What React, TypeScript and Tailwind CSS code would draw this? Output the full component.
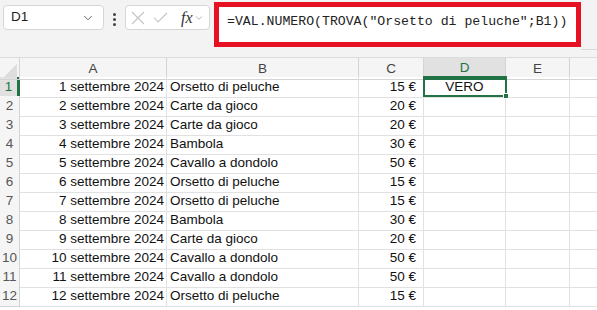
import { ChevronDown } from 'lucide-react'

const rows = [
  ['1 settembre 2024', 'Orsetto di peluche', '15 €'],
  ['2 settembre 2024', 'Carte da gioco', '20 €'],
  ['3 settembre 2024', 'Carte da gioco', '20 €'],
  ['4 settembre 2024', 'Bambola', '30 €'],
  ['5 settembre 2024', 'Cavallo a dondolo', '50 €'],
  ['6 settembre 2024', 'Orsetto di peluche', '15 €'],
  ['7 settembre 2024', 'Orsetto di peluche', '15 €'],
  ['8 settembre 2024', 'Bambola', '30 €'],
  ['9 settembre 2024', 'Carte da gioco', '20 €'],
  ['10 settembre 2024', 'Cavallo a dondolo', '50 €'],
  ['11 settembre 2024', 'Cavallo a dondolo', '50 €'],
  ['12 settembre 2024', 'Orsetto di peluche', '15 €'],
]

const cols = ['A', 'B', 'C', 'D', 'E']
const gridCols = 'grid grid-cols-[20px_147px_192px_65px_82px_64px_1fr]'

export default function App() {
  return (
    <div className="w-[597px] h-[310px] overflow-hidden bg-white text-[13px] text-[#111]" style={{ fontFamily: '"Liberation Sans", Arial, sans-serif' }}>
      {/* formula bar */}
      <div className="h-[58px] bg-[#f3f3f3] border-b border-[#dcdcdc] flex items-start">
        <div className="mt-[5px] ml-[3px] w-[101px] h-[25px] bg-white rounded-[4px] border border-[#d6d6d6] flex items-center justify-between pl-[7px] pr-[8px]">
          <span className="text-[13.5px] text-[#1f1f1f]">D1</span>
          <ChevronDown className="w-[14px] h-[14px] text-[#555]" strokeWidth={1.5} />
        </div>
        <div className="mt-[13px] ml-[9px] flex flex-col gap-[2px]">
          <span className="w-[3px] h-[3px] bg-[#444] rounded-full" />
          <span className="w-[3px] h-[3px] bg-[#444] rounded-full" />
          <span className="w-[3px] h-[3px] bg-[#444] rounded-full" />
        </div>
        <div className="mt-[5px] ml-[9px] w-[85px] h-[25px] bg-white rounded-[4px] border border-[#d6d6d6] flex items-center pl-[5px]">
          <svg width="14" height="14" viewBox="0 0 14 14" fill="none" stroke="#c4c4c4" strokeWidth="1.1">
            <path d="M1 1L13 13M13 1L1 13" />
          </svg>
          <svg className="ml-[8px]" width="15" height="11" viewBox="0 0 15 11" fill="none" stroke="#c4c4c4" strokeWidth="1.1">
            <path d="M1 5.5L5 10L14 1" />
          </svg>
          <span className="ml-[13px] italic text-[16px] text-[#333] leading-none" style={{ fontFamily: '"Liberation Serif", serif' }}>fx</span>
          <ChevronDown className="ml-[1px] w-[10px] h-[10px] text-[#888]" strokeWidth={1.5} />
        </div>
        <div className="mt-[2px] ml-[4px] w-[367px] h-[45px] bg-white border-[5px] border-[#e81123] pl-[8px] pt-[4px]">
          <span className="text-[13.2px] text-[#222]" style={{ fontFamily: '"Liberation Mono", monospace' }}>=VAL.NUMERO(TROVA("Orsetto di peluche";B1))</span>
        </div>
        <div className="flex-1 h-[50px] border-b border-[#d8d8d8]" />
      </div>

      {/* sheet */}
      <div className="relative text-[13.5px]">
        <div className={`${gridCols} h-[19px] bg-[#f5f5f5]`}>
          <div className="relative border-r border-b border-[#d4d4d4]">
            <div className="absolute right-[2px] bottom-[2px] w-0 h-0 border-l-[13px] border-l-transparent border-b-[13px] border-b-[#dcdcdc]" />
          </div>
          {cols.map((c) => (
            <div
              key={c}
              className={
                c === 'D'
                  ? 'flex items-center justify-center bg-[#e1e1e1] text-[#217346] border-r border-[#d4d4d4] border-b-2 border-b-[#217346]'
                  : 'flex items-center justify-center text-[#444] border-r border-b border-[#d4d4d4]'
              }
            >
              {c}
            </div>
          ))}
          <div className="border-b border-[#d4d4d4]" />
        </div>
        {rows.map((r, i) => (
          <div key={i} className={`${gridCols} h-[19px]`}>
            <div
              className={
                i === 0
                  ? 'flex items-center justify-center bg-[#e1e1e1] text-[#217346] border-b border-[#e1e1e1] border-r-[3px] border-r-[#217346]'
                  : 'flex items-center justify-center bg-[#f5f5f5] text-[#555] border-r border-b border-[#d4d4d4]'
              }
            >
              {i + 1}
            </div>
            <div className="flex items-center justify-end pr-[2px] border-r border-b border-[#e1e1e1] whitespace-nowrap">{r[0]}</div>
            <div className="flex items-center pl-[3px] border-r border-b border-[#e1e1e1] whitespace-nowrap">{r[1]}</div>
            <div className="flex items-center justify-end pr-[7px] border-r border-b border-[#e1e1e1] whitespace-nowrap">{r[2]}</div>
            <div className="flex items-center justify-center border-r border-b border-[#e1e1e1]">{i === 0 ? 'VERO' : ''}</div>
            <div className="border-r border-b border-[#e1e1e1]" />
            <div className="border-b border-[#e1e1e1]" />
          </div>
        ))}
        {/* selection around D1 */}
        <div className="absolute left-[423px] top-[18px] w-[84px] h-[21px] border-2 border-[#217346]" />
        <div className="absolute left-[503px] top-[35px] w-[6px] h-[6px] bg-[#217346] border border-white" />
      </div>
    </div>
  )
}
